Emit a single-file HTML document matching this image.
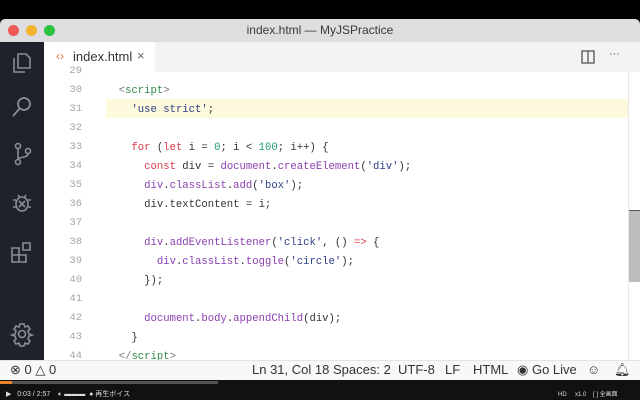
<!DOCTYPE html>
<html><head><meta charset="utf-8"><style>
*{margin:0;padding:0;box-sizing:border-box}
body{width:640px;height:400px;overflow:hidden;background:#000;position:relative;font-family:"Liberation Sans",sans-serif}
.abs{position:absolute}
.code{font-family:"Liberation Mono",monospace;font-size:10.6px;white-space:pre;color:#333}
.ln{position:absolute;left:44px;width:38px;text-align:right;font-family:"Liberation Mono",monospace;font-size:10.5px;color:#a5a5a5}
.k{color:#d6394a}.p{color:#8a3fb0}.s{color:#2d3f86}.n{color:#1f9b6e}.t{color:#2f8a47}.g{color:#777}
svg{position:absolute}
</style></head><body>
<div class="abs" style="top:0;left:0;width:640px;height:19px;background:#000"></div>
<div class="abs" style="top:19px;left:0;width:640px;height:23px;background:#dedddf;border-radius:5px 5px 0 0"></div>
<div class="abs" style="top:25px;left:8px;width:11px;height:11px;border-radius:50%;background:#ee5a55"></div>
<div class="abs" style="top:25px;left:26px;width:11px;height:11px;border-radius:50%;background:#f2b330"></div>
<div class="abs" style="top:25px;left:44px;width:11px;height:11px;border-radius:50%;background:#2dc23f"></div>
<div class="abs" style="top:23px;left:0;width:640px;text-align:center;font-size:12px;color:#3a3a3a">index.html — MyJSPractice</div>
<div class="abs" style="top:42px;left:0;width:44px;height:318px;background:#1f222b"></div>
<svg style="left:9px;top:50px" width="26" height="26" viewBox="0 0 26 26" fill="none" stroke="#8a8d96" stroke-width="1.6"><path d="M9 4h8l4 4v10H9z M5 8v14h11"/></svg>
<svg style="left:9px;top:94px" width="26" height="26" viewBox="0 0 26 26" fill="none" stroke="#8a8d96" stroke-width="1.8"><circle cx="15" cy="10" r="6"/><path d="M11 14l-7 8"/></svg>
<svg style="left:9px;top:141px" width="26" height="26" viewBox="0 0 26 26" fill="none" stroke="#8a8d96" stroke-width="1.6"><circle cx="9" cy="5" r="2.5"/><circle cx="9" cy="21" r="2.5"/><circle cx="19" cy="10" r="2.5"/><path d="M9 8v10M19 13c0 4-10 3-10 5"/></svg>
<svg style="left:9px;top:190px" width="26" height="26" viewBox="0 0 26 26" fill="none" stroke="#8a8d96" stroke-width="1.6"><ellipse cx="13" cy="14" rx="6" ry="7"/><path d="M10 11l6 6M16 11l-6 6M4 10h3M19 10h3M4 17h3M19 17h3M9 5l2 3M17 5l-2 3"/></svg>
<svg style="left:9px;top:240px" width="26" height="26" viewBox="0 0 26 26" fill="none" stroke="#8a8d96" stroke-width="1.6"><path d="M3 8h7v7H3zM3 15h7v7H3zM10 15h7v7h-7zM14 3h7v7h-7z"/></svg>
<svg style="left:9px;top:321px" width="26" height="26" viewBox="0 0 26 26" fill="none" stroke="#8a8d96" stroke-width="1.6"><circle cx="13" cy="13" r="3.5"/><path d="M11 3h4l1 3 3-1 2 3-2 2 1 3 3 1v0l-3 1-1 3 2 2-2 3-3-1-1 3h-4l-1-3-3 1-2-3 2-2-1-3-3-1 3-1 1-3-2-2 2-3 3 1z"/></svg>
<div class="abs" style="top:42px;left:44px;width:596px;height:30px;background:#f3f3f3"></div>
<div class="abs" style="top:42px;left:44px;width:111px;height:30px;background:#fff"></div>
<div class="abs" style="top:49px;left:56px;font-size:12px;color:#e07b39">‹›</div>
<div class="abs" style="top:49px;left:73px;font-size:13px;color:#333">index.html</div>
<div class="abs" style="top:48px;left:137px;font-size:13px;color:#666">×</div>
<svg style="left:581px;top:50px" width="14" height="14" viewBox="0 0 14 14" fill="none" stroke="#555" stroke-width="1.3"><rect x="1" y="1" width="12" height="12"/><path d="M7 1v12"/></svg>
<div class="abs" style="top:48px;left:609px;font-size:11px;color:#555">···</div>
<div class="abs" style="top:72px;left:44px;width:596px;height:288px;background:#fff"></div>
<div class="abs" style="top:99px;left:106px;width:522px;height:19px;background:#fdf9dc"></div>
<div class="abs" style="top:72px;left:628px;width:1px;height:288px;background:#e8e8e8"></div>
<div class="abs" style="top:210px;left:629px;width:11px;height:72px;background:#bdbdbd;border-top:1px solid #555"></div>
<div class="ln" style="top:65px">29</div>
<div class="ln" style="top:84px">30</div><div class="ln" style="top:103px">31</div><div class="ln" style="top:122px">32</div><div class="ln" style="top:141px">33</div><div class="ln" style="top:160px">34</div><div class="ln" style="top:179px">35</div><div class="ln" style="top:198px">36</div><div class="ln" style="top:217px">37</div><div class="ln" style="top:236px">38</div><div class="ln" style="top:255px">39</div><div class="ln" style="top:274px">40</div><div class="ln" style="top:293px">41</div><div class="ln" style="top:312px">42</div><div class="ln" style="top:331px">43</div><div class="ln" style="top:350px">44</div>
<div class="abs code" style="left:106px;top:82px;line-height:19px">  <span class="g">&lt;</span><span class="t">script</span><span class="g">&gt;</span>
    <span class="s">'use strict'</span>;

    <span class="k">for</span> (<span class="k">let</span> i = <span class="n">0</span>; i &lt; <span class="n">100</span>; i++) {
      <span class="k">const</span> div = <span class="p">document</span>.<span class="p">createElement</span>(<span class="s">'div'</span>);
      <span class="p">div</span>.<span class="p">classList</span>.<span class="p">add</span>(<span class="s">'box'</span>);
      div.textContent = i;

      <span class="p">div</span>.<span class="p">addEventListener</span>(<span class="s">'click'</span>, () <span class="k">=&gt;</span> {
        <span class="p">div</span>.<span class="p">classList</span>.<span class="p">toggle</span>(<span class="s">'circle'</span>);
      });

      <span class="p">document</span>.<span class="p">body</span>.<span class="p">appendChild</span>(div);
    }
  <span class="g">&lt;/</span><span class="t">script</span><span class="g">&gt;</span></div>
<div class="abs" style="top:360px;left:0;width:640px;height:20px;background:#f8f8f8;border-top:1px solid #e4e4e4"></div>
<div class="abs" style="top:362px;left:10px;font-size:13px;color:#333">⊗ 0 △ 0</div>
<div class="abs" style="top:362px;left:0;width:640px;font-size:13px;color:#333;white-space:pre"><span style="position:absolute;left:252px">Ln 31, Col 18</span><span style="position:absolute;left:333px">Spaces: 2</span><span style="position:absolute;left:398px">UTF-8</span><span style="position:absolute;left:445px">LF</span><span style="position:absolute;left:473px">HTML</span><span style="position:absolute;left:517px">◉ Go Live</span><span style="position:absolute;left:587px">☺</span><span style="position:absolute;left:614px">🔔︎</span></div>
<div class="abs" style="top:380px;left:0;width:640px;height:20px;background:#111"></div>
<div class="abs" style="top:381px;left:0;width:218px;height:3px;background:#555"></div>
<div class="abs" style="top:381px;left:0;width:12px;height:3px;background:#e8852b"></div>
<div class="abs" style="top:389px;left:6px;font-size:7px;color:#ddd">▶ &nbsp;&nbsp;0:03 / 2:57 &nbsp;&nbsp;&nbsp;🔈︎ ▬▬▬ &nbsp;● 再生ボイス</div>
<div class="abs" style="top:389px;left:558px;font-size:6px;color:#ddd">HD &nbsp;&nbsp;&nbsp;&nbsp;x1.0 &nbsp;&nbsp;&nbsp;[ ] 全画面</div>
</body></html>
